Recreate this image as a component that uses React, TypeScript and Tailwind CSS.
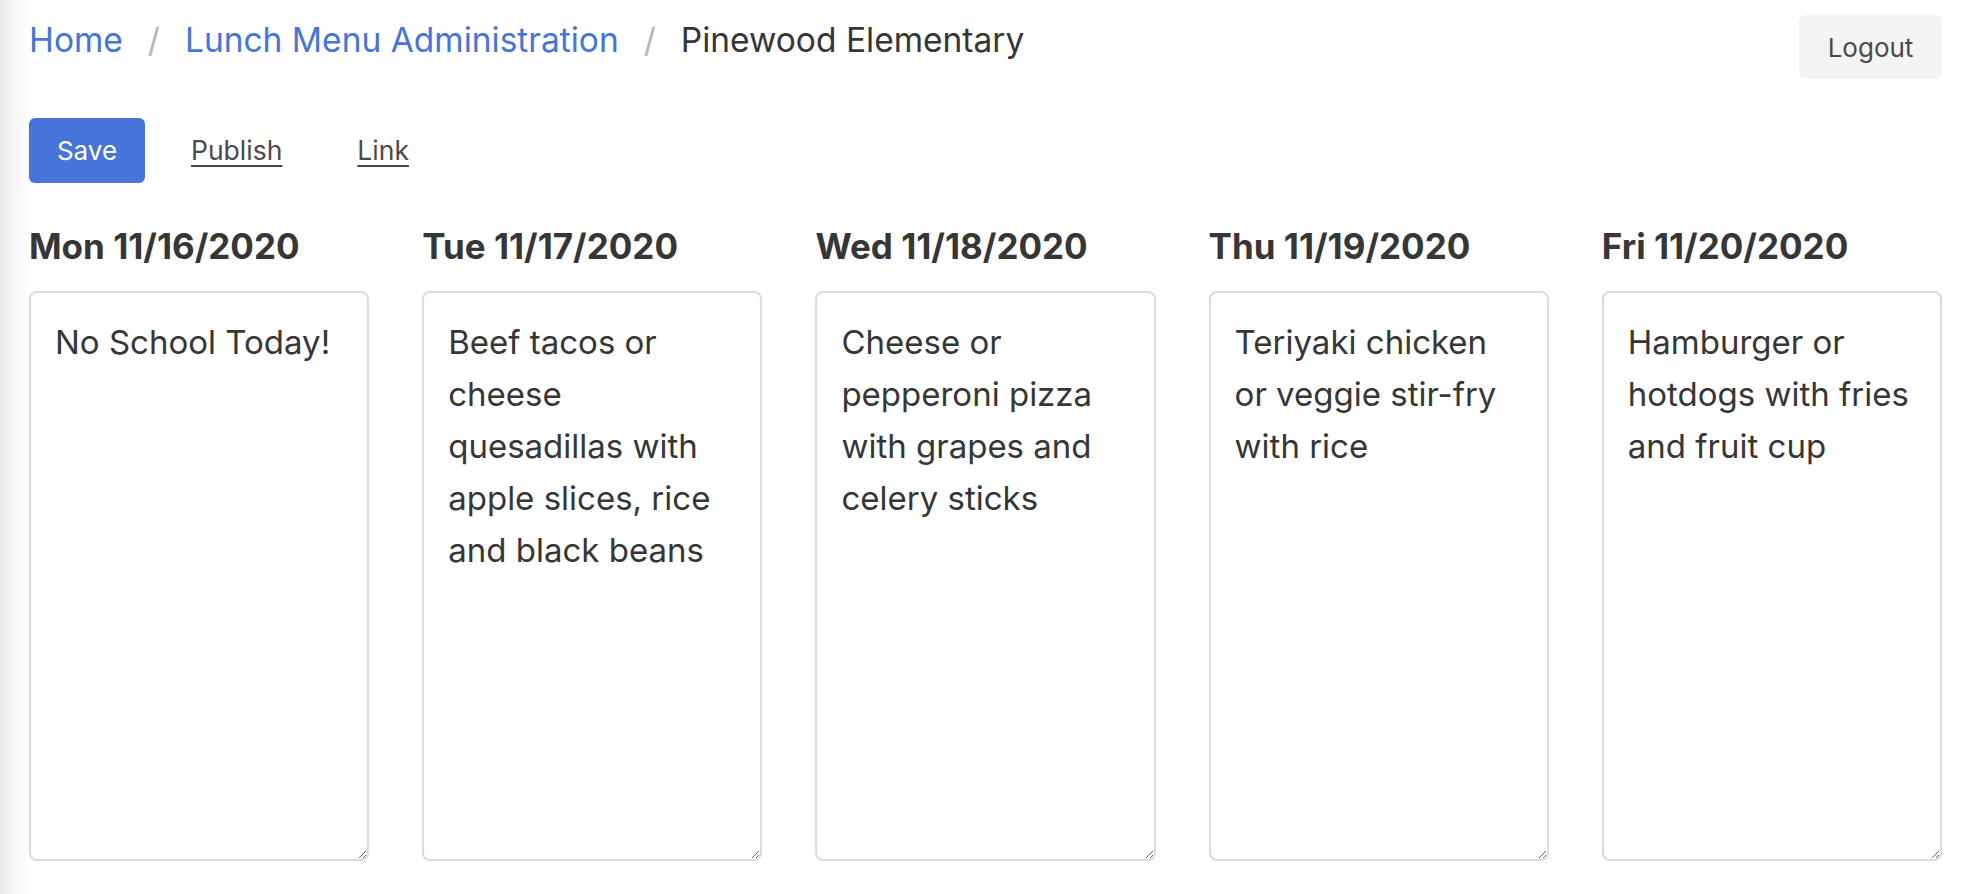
import React from 'react';

const days = [
    { label: 'Mon 11/16/2020', menu: 'No School Today!' },
    { label: 'Tue 11/17/2020', menu: 'Beef tacos or cheese quesadillas with apple slices, rice and black beans' },
    { label: 'Wed 11/18/2020', menu: 'Cheese or pepperoni pizza with grapes and celery sticks' },
    { label: 'Thu 11/19/2020', menu: 'Teriyaki chicken or veggie stir-fry with rice' },
    { label: 'Fri 11/20/2020', menu: 'Hamburger or hotdogs with fries and fruit cup' },
];

const App: React.FC = () => {
    return (
        <div
            className="min-h-screen w-full bg-[linear-gradient(to_right,#e9e9e9_0px,#f7f7f7_14px,#ffffff_32px)] pl-[29px] pr-[26px] pt-[15px] text-[#363636]"
            style={{ fontFamily: 'Inter, "Noto Sans", sans-serif' }}
        >
            {/* top bar */}
            <div className="flex items-start justify-between">
                <nav className="flex items-center text-[33.5px] leading-[50px]">
                    <a href="#" className="text-[#4674d9]">Home</a>
                    <span className="px-[25px] text-[#b5b5b5]">/</span>
                    <a href="#" className="text-[#4674d9]">Lunch Menu Administration</a>
                    <span className="px-[25px] text-[#b5b5b5]">/</span>
                    <span className="text-[#363636]">Pinewood Elementary</span>
                </nav>
                <button className="h-[64px] w-[143px] rounded-md bg-[#f4f4f4] text-[26px] text-[#4a4a4a]">
                    Logout
                </button>
            </div>

            {/* actions */}
            <div className="mt-[39px] flex items-center">
                <button className="h-[65px] w-[116px] rounded-md bg-[#4674d9] text-[26px] text-white">
                    Save
                </button>
                <a href="#" className="ml-[46px] text-[26.5px] text-[#4a4a4a] underline underline-offset-[5px]">
                    Publish
                </a>
                <a href="#" className="ml-[75px] text-[26.5px] text-[#4a4a4a] underline underline-offset-[5px]">
                    Link
                </a>
            </div>

            {/* week */}
            <div className="mt-[43px] grid grid-cols-5 gap-x-[53px]">
                {days.map(day => (
                    <div key={day.label} className="flex flex-col">
                        <h2 className="text-[35px] font-bold leading-[40px] text-[#363636]">{day.label}</h2>
                        <textarea
                            defaultValue={day.menu}
                            className="mt-[25px] h-[570px] w-full resize-y rounded-lg border-2 border-[#dbdbdb] bg-white px-[24px] py-[23px] text-[33px] leading-[52px] text-[#363636] outline-none"
                        />
                    </div>
                ))}
            </div>
        </div>
    );
};

export default App;
